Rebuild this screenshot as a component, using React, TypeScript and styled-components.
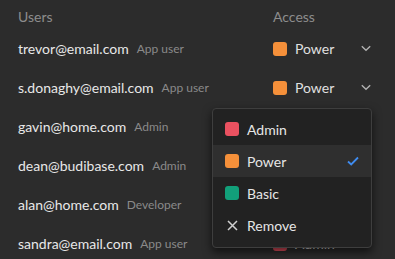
import React from 'react';
import styled, { createGlobalStyle } from 'styled-components';

type Role = 'Admin' | 'Power' | 'Basic';

const roleColors: Record<Role, string> = {
  Admin: '#ea5160',
  Power: '#f5903a',
  Basic: '#12a07a',
};

const users: { email: string; type: string; access: Role }[] = [
  { email: 'trevor@email.com', type: 'App user', access: 'Power' },
  { email: 's.donaghy@email.com', type: 'App user', access: 'Power' },
  { email: 'gavin@home.com', type: 'Admin', access: 'Admin' },
  { email: 'dean@budibase.com', type: 'Admin', access: 'Admin' },
  { email: 'alan@home.com', type: 'Developer', access: 'Basic' },
  { email: 'sandra@email.com', type: 'App user', access: 'Admin' },
];

const GlobalStyle = createGlobalStyle`
  html, body {
    margin: 0;
    padding: 0;
    background: #2c2c2c;
    font-family: Lato, "Noto Sans", sans-serif;
    overflow: hidden;
  }
`;

const Page = styled.div`
  position: relative;
  width: 395px;
  height: 259px;
  background: #2c2c2c;
  padding: 3px 0 0 18px;
  box-sizing: border-box;
`;

const Table = styled.div`
  display: grid;
  grid-template-columns: 255px 1fr;
  grid-template-rows: 26px;
  grid-auto-rows: 39px;
`;

const HeaderCell = styled.div`
  display: flex;
  align-items: center;
  color: #8d8d8d;
  font-size: 14px;
`;

const UserCell = styled.div`
  display: flex;
  align-items: center;
  gap: 8px;
`;

const Email = styled.span`
  color: #e8e8e8;
  font-size: 14px;
`;

const UserType = styled.span`
  color: #8a8a8a;
  font-size: 12px;
`;

const AccessCell = styled.div`
  display: flex;
  align-items: center;
  gap: 8px;
  color: #e0e0e0;
  font-size: 14px;
`;

const Swatch = styled.span<{ $color: string }>`
  width: 14px;
  height: 14px;
  border-radius: 3px;
  background: ${(p) => p.$color};
  flex-shrink: 0;
`;

const Chevron = styled.svg`
  margin-left: 19px;
`;

const Menu = styled.div`
  position: absolute;
  left: 212px;
  top: 108px;
  width: 158px;
  padding: 4px 0 6px;
  background: #222222;
  border: 1px solid #3e3e3e;
  border-radius: 4px;
  box-shadow: 0 4px 10px rgba(0, 0, 0, 0.65);
`;

const MenuItem = styled.div<{ $selected?: boolean }>`
  display: flex;
  align-items: center;
  gap: 8px;
  height: 32px;
  padding: 0 12px;
  background: ${(p) => (p.$selected ? '#2f2f2f' : 'transparent')};
  color: #e6e6e6;
  font-size: 14px;
`;

const ItemLabel = styled.span`
  flex: 1;
`;

const IconBox = styled.span`
  width: 14px;
  height: 14px;
  display: flex;
  align-items: center;
  justify-content: center;
`;

const ChevronIcon = () => (
  <Chevron width="10" height="7" viewBox="0 0 10 7">
    <path d="M0.8 1.2 L5 5.3 L9.2 1.2" fill="none" stroke="#b0b0b0" strokeWidth="1.4" />
  </Chevron>
);

const App: React.FC = () => {
  return (
    <Page>
      <GlobalStyle />
      <Table>
        <HeaderCell>Users</HeaderCell>
        <HeaderCell>Access</HeaderCell>
        {users.map((u) => (
          <React.Fragment key={u.email}>
            <UserCell>
              <Email>{u.email}</Email>
              <UserType>{u.type}</UserType>
            </UserCell>
            <AccessCell>
              <Swatch $color={roleColors[u.access]} />
              {u.access}
              <ChevronIcon />
            </AccessCell>
          </React.Fragment>
        ))}
      </Table>
      <Menu>
        {(['Admin', 'Power', 'Basic'] as Role[]).map((r) => (
          <MenuItem key={r} $selected={r === 'Power'}>
            <Swatch $color={roleColors[r]} />
            <ItemLabel>{r}</ItemLabel>
            {r === 'Power' && (
              <svg width="12" height="10" viewBox="0 0 12 10">
                <path d="M1 5.5 L4.2 8.5 L11 1.5" fill="none" stroke="#3f8cf0" strokeWidth="1.8" />
              </svg>
            )}
          </MenuItem>
        ))}
        <MenuItem>
          <IconBox>
            <svg width="11" height="11" viewBox="0 0 11 11">
              <path d="M1 1 L10 10 M10 1 L1 10" stroke="#d0d0d0" strokeWidth="1.5" />
            </svg>
          </IconBox>
          <ItemLabel>Remove</ItemLabel>
        </MenuItem>
      </Menu>
    </Page>
  );
};

export default App;
